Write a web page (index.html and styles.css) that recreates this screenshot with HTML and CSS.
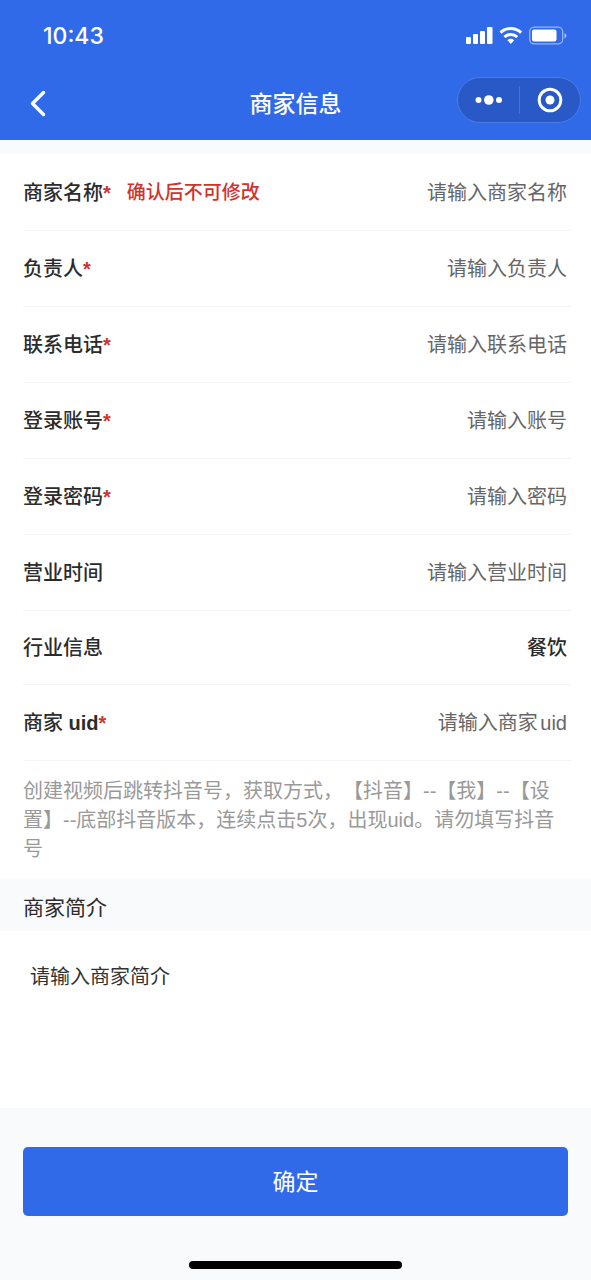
FILE: index.html
```
<!DOCTYPE html>
<html lang="zh-CN">
<head>
<meta charset="utf-8">
<meta name="viewport" content="width=device-width, initial-scale=1">
<title>商家信息</title>
<link rel="stylesheet" href="styles.css">
</head>
<body>
<div class="page">
  <header class="header">
    <div class="status">
      <span class="clock">10:43</span>
      <svg class="status-icons" width="102" height="20" viewBox="0 0 102 20" fill="#fff" aria-hidden="true">
        <rect x="1" y="12" width="5" height="7" rx="1"/>
        <rect x="8" y="9" width="5" height="10" rx="1"/>
        <rect x="15" y="6" width="5" height="13" rx="1"/>
        <rect x="22" y="2" width="5.500" height="17" rx="1"/>
        <g fill="none" stroke="#fff" stroke-width="3">
          <path d="M35.500 7.600a15 15 0 0 1 20.600 0"/>
          <path d="M39.400 12a9.300 9.300 0 0 1 12.800 0"/>
        </g>
        <path d="M42.400 15.200a5.200 5.200 0 0 1 6.800 0L45.800 18.900z"/>
        <rect x="64.700" y="2.200" width="33" height="16.600" rx="4.500" fill="none" stroke="#fff" stroke-opacity=".5" stroke-width="1.300"/>
        <rect x="67" y="4.500" width="24.500" height="12" rx="2"/>
        <path d="M99.500 8v5.400q2-1 2-2.700t-2-2.700z" fill-opacity=".6"/>
      </svg>
    </div>
    <div class="navbar">
      <button class="back" type="button" aria-label="返回">
        <svg width="20" height="30" viewBox="0 0 20 30" fill="none" stroke="#fff" stroke-width="3.400" stroke-linecap="round" stroke-linejoin="round"><path d="M15.500 4.500 4.500 15.500 15.500 26.500"/></svg>
      </button>
      <h1 class="title">商家信息</h1>
      <div class="capsule">
        <button class="capsule-btn" type="button" aria-label="更多">
          <svg width="28" height="26" viewBox="0 0 28 26" fill="#fff"><circle cx="4.500" cy="13" r="3"/><circle cx="14.800" cy="13" r="4.800"/><circle cx="25" cy="13" r="3"/></svg>
        </button>
        <button class="capsule-btn" type="button" aria-label="关闭">
          <svg width="28" height="26" viewBox="0 0 28 26" fill="#fff"><circle cx="14" cy="13" r="10.800" fill="none" stroke="#fff" stroke-width="3"/><circle cx="14" cy="13" r="4.500"/></svg>
        </button>
      </div>
    </div>
  </header>
  <form class="form">
    <div class="fields">
      <div class="row"><label class="label" for="name">商家名称<span class="star">*</span></label><span class="warning">确认后不可修改</span><input class="input" id="name" type="text" placeholder="请输入商家名称"></div>
      <div class="row"><label class="label" for="owner">负责人<span class="star">*</span></label><input class="input" id="owner" type="text" placeholder="请输入负责人"></div>
      <div class="row"><label class="label" for="phone">联系电话<span class="star">*</span></label><input class="input" id="phone" type="tel" placeholder="请输入联系电话"></div>
      <div class="row"><label class="label" for="account">登录账号<span class="star">*</span></label><input class="input" id="account" type="text" placeholder="请输入账号"></div>
      <div class="row"><label class="label" for="password">登录密码<span class="star">*</span></label><input class="input" id="password" type="password" placeholder="请输入密码"></div>
      <div class="row"><label class="label" for="hours">营业时间</label><input class="input" id="hours" type="text" placeholder="请输入营业时间"></div>
      <div class="row row-short"><span class="label">行业信息</span><button class="picker" type="button">餐饮</button></div>
      <div class="row"><label class="label" for="uid">商家 <span class="latin">uid</span><span class="star">*</span></label><input class="input" id="uid" type="text" placeholder="请输入商家uid"></div>
      <p class="note">创建视频后跳转抖音号，获取方式，【抖音】--【我】--【设置】--底部抖音版本，连续点击5次，出现uid。请勿填写抖音号</p>
    </div>
    <label class="section" for="intro">商家简介</label>
    <textarea class="intro" id="intro" placeholder="请输入商家简介"></textarea>
    <div class="actions"><button class="submit" type="submit">确定</button></div>
  </form>
  <div class="home-bar"></div>
</div>
</body>
</html>
```
FILE: styles.css
```
* {
  box-sizing: border-box;
}

body {
  margin: 0;
  background: #f9fafc;
  color: #2b2b2b;
  font-family: "Liberation Sans", "Noto Sans CJK SC", sans-serif;
  font-size: 20px;
  line-height: 28px;
}

button,
input,
textarea {
  margin: 0;
  padding: 0;
  border: 0;
  background: none;
  color: inherit;
  font: inherit;
}

.page {
  display: flex;
  flex-direction: column;
  min-height: 100vh;
}

.header {
  background: #306ae8;
  color: #fff;
}

.status {
  display: flex;
  align-items: center;
  justify-content: space-between;
  height: 70px;
  padding: 0 24px 0 43px;
}

.clock {
  padding-top: 2px;
  font-family: Inter, sans-serif;
  font-size: 23px;
  font-weight: 500;
}

.navbar {
  display: grid;
  grid-template-columns: 1fr auto 1fr;
  align-items: center;
  height: 70px;
  padding: 0 10px 10px;
}

.back {
  display: flex;
  justify-self: start;
  padding: 6px 0 0 18px;
}

.title {
  margin: 0;
  padding-top: 8px;
  font-size: 23px;
  font-weight: 500;
}

.capsule {
  display: flex;
  justify-self: end;
  width: 124px;
  height: 46px;
  padding: 8px 0;
  border: 1px solid #4c7de0;
  border-radius: 23px;
  background: #2859c6;
}

.capsule-btn {
  display: flex;
  flex: 1;
  align-items: center;
  justify-content: center;
}

.capsule-btn + .capsule-btn {
  border-left: 1px solid #4773d1;
}

.form {
  display: flex;
  flex-direction: column;
  padding-top: 14px;
}

.fields {
  padding: 1px 20px 0 23px;
  background: #fff;
}

.row {
  display: flex;
  align-items: center;
  height: 76px;
  padding-right: 4px;
  border-bottom: 1px solid #f5f5f5;
}

.row-short {
  height: 74px;
}

.label,
.picker {
  font-weight: 500;
}

.latin,
.star {
  font-weight: 700;
}

.star,
.warning {
  color: #d2322b;
}

.warning {
  margin-left: 16px;
  font-size: 19px;
  font-weight: 500;
}

.input {
  flex: 1;
  min-width: 0;
  text-align: right;
  text-autospace: normal;
}

.input::placeholder {
  color: #666;
  opacity: 1;
}

.picker {
  margin-left: auto;
}

.note {
  margin: 0;
  padding: 16px 0 15px;
  color: #999;
  line-height: 29px;
  text-spacing-trim: space-all;
}

.section {
  padding: 15px 23px 9px;
  font-size: 21px;
}

.intro {
  height: 177px;
  padding: 32px 30px;
  background: #fff;
  resize: none;
}

.intro::placeholder {
  color: #333;
  opacity: 1;
}

.actions {
  display: flex;
  padding: 39px 23px;
}

.submit {
  flex: 1;
  height: 69px;
  border-radius: 5px;
  background: #306ae8;
  color: #fff;
  font-size: 23px;
}

.home-bar {
  width: 36%;
  height: 8px;
  margin: auto auto 11px;
  border-radius: 4px;
  background: #000;
}
```
